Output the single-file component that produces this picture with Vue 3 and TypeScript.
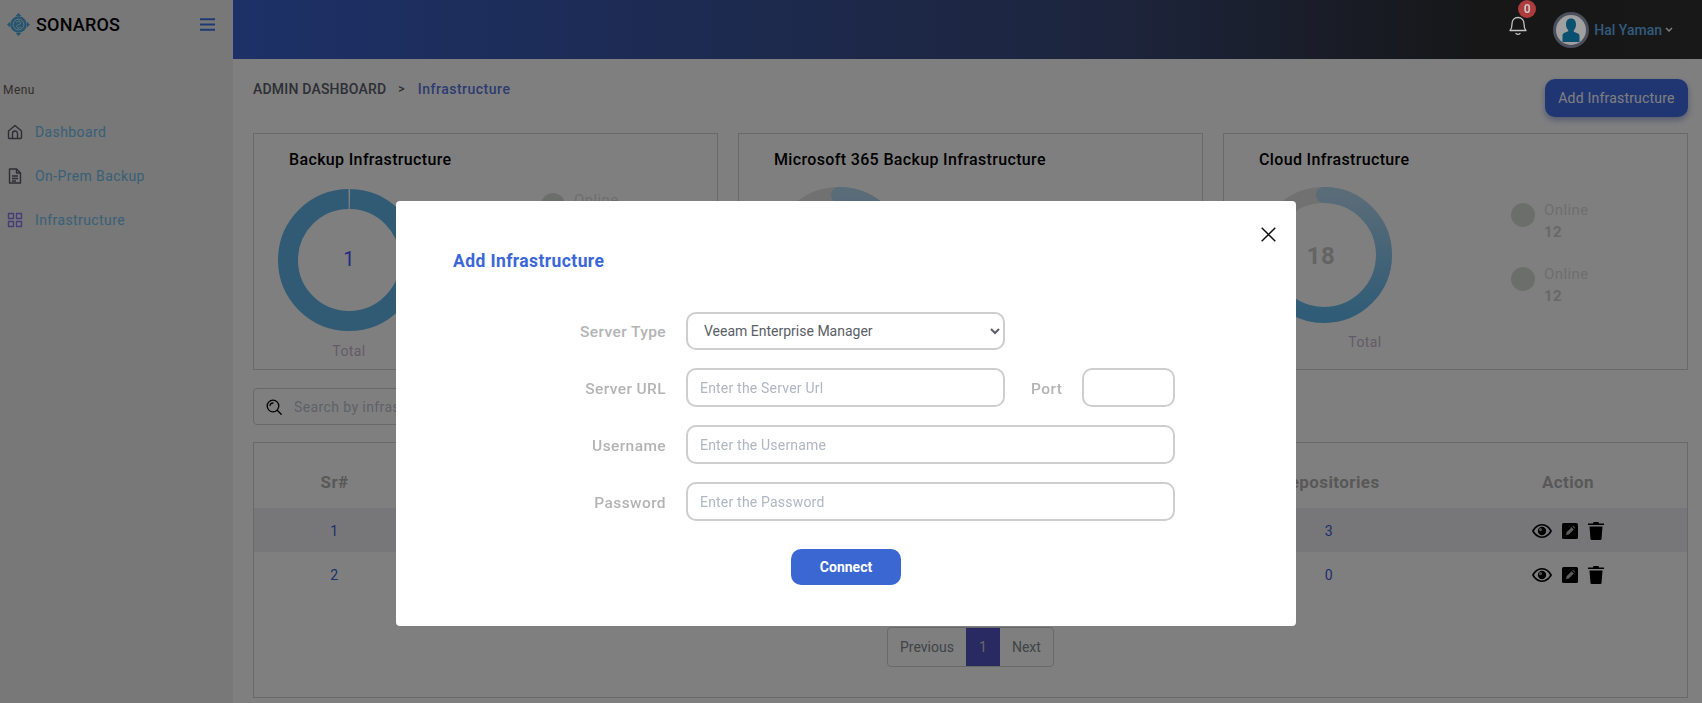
<template>
  <div class="page">
    <aside class="sidebar">
      <div class="brand">
        <svg class="logo" viewBox="0 0 24 24" width="23" height="23">
          <path d="M12 0l3 3.200h-6zM12 24l-3-3.200h6zM0 12l3.200-3v6zM24 12l-3.200 3V9z" fill="#4fa8de"/>
          <circle cx="12" cy="12" r="8.600" fill="#4fa8de"/>
          <circle cx="12" cy="12" r="5.600" fill="none" stroke="#d8eef8" stroke-width="1"/>
          <path d="M9.500 10c1-2 4.500-2 5 0s-4.500 2-4.500 4 3.500 2 4.500.5" fill="none" stroke="#d8eef8" stroke-width="1"/>
        </svg>
        <span class="brand-name">SONAROS</span>
        <svg class="burger" viewBox="0 0 15 13" width="15" height="13">
          <path d="M0 1.200h15M0 6.500h15M0 11.800h15" stroke="#3c74e8" stroke-width="2"/>
        </svg>
      </div>
      <div class="menu-label">Menu</div>
      <nav class="menu">
        <a v-for="item in menu" :key="item.label" class="menu-item">
          <svg viewBox="0 0 16 16" width="16" height="16" fill="none" :stroke="item.stroke" stroke-width="1.400" stroke-linejoin="round">
            <path v-for="d in item.paths" :key="d" :d="d"/>
          </svg>
          <span>{{ item.label }}</span>
        </a>
      </nav>
    </aside>

    <div class="content">
      <header class="topbar">
        <div class="bell">
          <svg viewBox="0 0 18 22" width="18" height="22" fill="none" stroke="#c4c4c4" stroke-width="1.300">
            <path d="M1 16.500c1.500-1.500 2-2.500 2-6.500 0-4 2.500-6.500 6-6.500s6 2.500 6 6.500c0 4 .5 5 2 6.500z" stroke-linejoin="round"/>
            <path d="M7 19.500q2 1.600 4 0" stroke-linecap="round"/>
          </svg>
          <span class="badge">0</span>
        </div>
        <div class="avatar">
          <svg viewBox="0 0 30 30" width="30" height="30">
            <circle cx="15" cy="15" r="15" fill="#a0a0a0"/>
            <path d="M15 3.500c3.400 0 5 2.600 5 6 0 2.600-1 4.600-2.200 5.800v1.500l4.200 1.700c1 .5 1.500 1.500 1.500 2.700V27H6.500v-6.300c0-1.200.5-2.200 1.500-2.700l4.200-1.700v-1.500C11 14.100 10 12.100 10 9.500c0-3.400 1.600-6 5-6z" fill="#0a5070"/>
          </svg>
        </div>
        <span class="user-name">Hal Yaman</span>
        <svg class="user-caret" viewBox="0 0 8 6" width="8" height="6" fill="none" stroke="#fff" stroke-width="1.500">
          <path d="M1 1l3 3 3-3"/>
        </svg>
      </header>

      <main class="main">
        <div class="crumb-row">
          <div class="crumbs">
            <span class="crumb-root">ADMIN DASHBOARD</span>
            <span class="crumb-sep">&gt;</span>
            <span class="crumb-current">Infrastructure</span>
          </div>
          <button class="add-btn">Add Infrastructure</button>
        </div>

        <section class="cards">
          <article v-for="(card, i) in cards" :key="card.title" class="card" :class="card.kind">
            <h3 class="card-title">{{ card.title }}</h3>
            <div class="card-body">
              <div class="donut-col">
                <div class="donut">
                  <svg v-if="card.kind === 'solid'" viewBox="0 0 142 142" width="142" height="142">
                    <circle cx="71" cy="71" r="61" fill="none" stroke="#62b7ea" stroke-width="20"
                      :stroke-dasharray="`${ringLen(61) - 2} 2`" stroke-dashoffset="-1" transform="rotate(-90 71 71)"/>
                  </svg>
                  <svg v-else viewBox="0 0 136 136" width="136" height="136">
                    <defs>
                      <linearGradient :id="`arc-grad-${i}`" x1="1" y1="0" x2="0" y2="0">
                        <stop offset="0" stop-color="#b4d8f0"/>
                        <stop offset="1" stop-color="#60b8ee"/>
                      </linearGradient>
                    </defs>
                    <circle cx="68" cy="68" r="60" fill="none" stroke="#e2e2e2" stroke-width="16"/>
                    <circle cx="68" cy="68" r="60" fill="none" :stroke="`url(#arc-grad-${i})`" stroke-width="16"
                      stroke-linecap="round" :stroke-dasharray="`${ringLen(60) * card.share} ${ringLen(60)}`" transform="rotate(-90 68 68)"/>
                  </svg>
                  <span class="donut-value">{{ card.total }}</span>
                </div>
                <div class="donut-total">Total</div>
              </div>
              <ul class="legend">
                <li v-for="n in 2" :key="n" class="legend-item">
                  <i class="legend-dot"></i>
                  <div class="legend-text">
                    <span>Online</span>
                    <b>12</b>
                  </div>
                </li>
              </ul>
            </div>
          </article>
        </section>

        <label class="search">
          <svg viewBox="0 0 16 16" width="16" height="16" fill="none" stroke="#000" stroke-width="1.300">
            <circle cx="7" cy="7" r="5.800"/>
            <path d="M4 6.500a3 3 0 0 1 3-2.500M11.200 11.200l4 4" stroke-linecap="round"/>
          </svg>
          <input type="text" placeholder="Search by infrastructure" />
        </label>

        <section class="table-box">
          <div class="table-row table-head">
            <span>Sr#</span>
            <span></span>
            <span>Repositories</span>
            <span>Action</span>
          </div>
          <div v-for="(row, i) in rows" :key="row.sr" class="table-row table-data" :class="{ striped: i === 0 }">
            <span class="cell-num">{{ row.sr }}</span>
            <span></span>
            <span class="cell-num">{{ row.repos }}</span>
            <span class="actions">
              <svg viewBox="0 0 20 14" width="20" height="14">
                <path fill-rule="evenodd" d="M10 0c4.600 0 8 3.200 10 7-2 3.800-5.400 7-10 7S2 10.800 0 7c2-3.800 5.400-7 10-7zM10 1.600C6.500 1.600 3.800 3.900 2 7c1.800 3.100 4.500 5.400 8 5.400s6.200-2.300 8-5.400c-1.800-3.100-4.500-5.400-8-5.400zM10 2.800a4.200 4.200 0 1 1 0 8.400 4.200 4.200 0 0 1 0-8.400z" fill="#000"/>
                <circle cx="8.500" cy="5.600" r="1.600" fill="#9a9a9a"/>
              </svg>
              <svg viewBox="0 0 16 16" width="16" height="16">
                <rect width="16" height="16" rx="1.500" fill="#000"/>
                <path d="M4 12l.6-2.800 5-5 2.200 2.200-5 5zM10.400 3.400l.7-.7 2.200 2.200-.7.7z" fill="#b8b8b8"/>
              </svg>
              <svg viewBox="0 0 16 18" width="16" height="18">
                <path d="M5.500 0h5l.5 1.500h5V3H0V1.500h5zM1.500 4.500h13l-1 12.500q-.1 1-1 1H3.500q-.9 0-1-1z" fill="#000"/>
              </svg>
            </span>
          </div>
          <div class="pager">
            <a>Previous</a>
            <a class="active">1</a>
            <a>Next</a>
          </div>
        </section>
      </main>
    </div>

    <div class="backdrop"></div>

    <div class="modal-wrap">
      <div class="modal">
        <button class="modal-close" aria-label="Close">
          <svg viewBox="0 0 15 15" width="15" height="15" fill="none" stroke="#111" stroke-width="1.500">
            <path d="M.7.7l13.600 13.600M14.300.7L.7 14.300"/>
          </svg>
        </button>
        <h2 class="modal-title">Add Infrastructure</h2>
        <form class="form" @submit.prevent>
          <div class="form-row">
            <label>Server Type</label>
            <select class="control short">
              <option>Veeam Enterprise Manager</option>
            </select>
          </div>
          <div class="form-row">
            <label>Server URL</label>
            <div class="url-line">
              <input class="control short" placeholder="Enter the Server Url" />
              <label class="port-label">Port</label>
              <input class="control port" />
            </div>
          </div>
          <div class="form-row">
            <label>Username</label>
            <input class="control" placeholder="Enter the Username" />
          </div>
          <div class="form-row">
            <label>Password</label>
            <input class="control" placeholder="Enter the Password" />
          </div>
          <button class="connect" type="submit">Connect</button>
        </form>
      </div>
    </div>
  </div>
</template>

<script setup lang="ts">
interface MenuItem {
  label: string;
  stroke: string;
  paths: string[];
}

const menu: MenuItem[] = [
  {
    label: "Dashboard",
    stroke: "#5c5c64",
    paths: [
      "M1.500 7L8 1.500 14.500 7v6.500a1 1 0 0 1-1 1h-11a1 1 0 0 1-1-1z",
      "M5.500 14.500V9.500a2.500 2.500 0 0 1 5 0v5",
    ],
  },
  {
    label: "On-Prem Backup",
    stroke: "#5c5c64",
    paths: [
      "M2.500 1h7l4 4v10h-11z",
      "M9.500 1v4h4",
      "M5 8h6M5 10.500h6M5 13h4",
    ],
  },
  {
    label: "Infrastructure",
    stroke: "#8a78f0",
    paths: [
      "M1.500 1.500h5v5h-5z",
      "M9.500 1.500h5v5h-5z",
      "M1.500 9.500h5v5h-5z",
      "M9.500 9.500h5v5h-5z",
    ],
  },
];

const cards = [
  { title: "Backup Infrastructure", kind: "solid", total: 1, share: 1 },
  { title: "Microsoft 365 Backup Infrastructure", kind: "arc", total: 18, share: 2 / 3 },
  { title: "Cloud Infrastructure", kind: "arc", total: 18, share: 2 / 3 },
];

const rows = [
  { sr: 1, repos: 3 },
  { sr: 2, repos: 0 },
];

const ringLen = (r: number) => 2 * Math.PI * r;
</script>

<style>
html,
body {
  margin: 0;
  overflow: hidden;
  background: #fff;
}
</style>

<style scoped>
.page {
  display: flex;
  width: 1702px;
  height: 703px;
  font-family: Roboto, "Liberation Sans", sans-serif;
  font-size: 14px;
  letter-spacing: 0.4px;
  color: #333;
  overflow: hidden;
}

.sidebar {
  flex: 0 0 233px;
  background: #f0f0f0;
}

.brand {
  display: flex;
  align-items: center;
  height: 48px;
  padding-left: 7px;
}

.logo {
  margin-right: 6px;
}

.brand-name {
  font-size: 18px;
  font-weight: 500;
  color: #000;
  letter-spacing: 0.2px;
}

.burger {
  margin-left: auto;
  margin-right: 18px;
}

.menu-label {
  margin-top: 34px;
  padding-left: 3px;
  font-size: 12px;
  line-height: 16px;
  color: #6a5a58;
}

.menu {
  margin-top: 24px;
  display: flex;
  flex-direction: column;
  gap: 24px;
}

.menu-item {
  display: flex;
  align-items: center;
  gap: 12px;
  height: 20px;
  padding-left: 7px;
  color: #70c0ee;
}

.content {
  flex: 1;
  min-width: 0;
  display: flex;
  flex-direction: column;
}

.topbar {
  flex: 0 0 59px;
  display: flex;
  align-items: center;
  padding-right: 29px;
  justify-content: flex-end;
  background: linear-gradient(90deg, #3a62d0 0%, #3a4a7a 60%, #2e2e30 85%, #303032 100%);
}

.bell {
  position: relative;
  z-index: 11;
  margin-right: 26px;
  height: 22px;
  margin-top: -9px;
}

.badge {
  position: absolute;
  top: -14px;
  right: -9px;
  width: 18px;
  height: 18px;
  border-radius: 50%;
  background: #ae3c3c;
  color: #c8c8c8;
  font-size: 12px;
  font-weight: 700;
  line-height: 18px;
  text-align: center;
}

.avatar {
  position: relative;
  z-index: 11;
  width: 30px;
  height: 30px;
  padding: 3px;
  border-radius: 50%;
  background: #4c4f5c;
  overflow: hidden;
}

.user-name {
  margin-left: 5px;
  font-weight: 500;
  color: #66b6f2;
  letter-spacing: 0;
}

.user-caret {
  margin-left: 3px;
}

.main {
  flex: 1;
  padding: 20px 14px 0 20px;
  background: #fff;
}

.crumb-row {
  display: flex;
  justify-content: space-between;
  align-items: flex-start;
  height: 38px;
  margin-bottom: 16px;
}

.crumbs {
  display: flex;
  align-items: center;
  height: 20px;
  font-weight: 500;
  letter-spacing: 0.2px;
}

.crumb-root {
  color: #5a5e6a;
}

.crumb-sep {
  margin: 0 13px 0 12px;
  color: #5a5e6a;
  font-size: 12px;
}

.crumb-current {
  color: #5a78e0;
  letter-spacing: 0.5px;
}

.add-btn {
  width: 143px;
  height: 38px;
  border: none;
  border-radius: 10px;
  background: #3e6ce6;
  color: #fff;
  font: inherit;
  letter-spacing: 0.2px;
  box-shadow: 0 3px 6px rgba(60, 80, 180, 0.45);
}

.cards {
  display: flex;
  gap: 20px;
}

.card {
  box-sizing: border-box;
  flex: 0 0 465px;
  height: 237px;
  padding: 15px 0 0 35px;
  border: 1px solid #d2d2d2;
}

.card-title {
  margin: 0;
  font-size: 16px;
  font-weight: 500;
  line-height: 22px;
  letter-spacing: 0.35px;
  color: #000;
}

.card-body {
  display: flex;
  margin-left: -11px;
  margin-top: 18px;
}

.donut-col {
  width: 142px;
  text-align: center;
}

.donut {
  position: relative;
  height: 142px;
}

.donut svg {
  display: block;
}

.donut-value {
  position: absolute;
  left: 0;
  right: 0;
  top: 57px;
  font-size: 20px;
  line-height: 26px;
  color: #5050ff;
}

.donut-total {
  margin-top: 10px;
  font-size: 14px;
  line-height: 20px;
  color: #c4b8d0;
}

.legend {
  list-style: none;
  margin: 4px 0 0 121px;
  padding: 0;
}

.arc .card-body {
  margin-left: -6px;
  margin-top: 16px;
}

.arc .donut-col {
  width: 136px;
}

.arc .donut {
  height: 136px;
}

.arc .donut svg {
  margin-left: 3px;
}

.arc .donut-value {
  top: 55px;
  font-size: 24px;
  font-weight: 700;
  line-height: 28px;
  color: #c8c8c8;
}

.arc .donut-total {
  margin-top: 9px;
  padding-left: 88px;
}

.arc .legend {
  margin: 16px 0 0 122px;
}

.legend-item {
  display: flex;
  gap: 9px;
  height: 64px;
}

.legend-dot {
  flex: 0 0 24px;
  height: 24px;
  border-radius: 50%;
  background: #d8dcd8;
}

.legend-text {
  display: flex;
  flex-direction: column;
  margin-top: -4px;
  color: #dcdcdc;
  font-size: 15px;
  line-height: 22px;
}

.legend-text b {
  font-size: 15px;
  font-weight: 700;
  color: #d0d0d0;
}

.search {
  display: flex;
  align-items: center;
  gap: 10px;
  box-sizing: border-box;
  width: 420px;
  height: 37px;
  margin-top: 18px;
  padding-left: 12px;
  border: 1px solid #d2d2d2;
  border-radius: 4px;
}

.search input {
  flex: 1;
  min-width: 0;
  border: none;
  outline: none;
  font: inherit;
  letter-spacing: 0.4px;
  background: transparent;
}

.search input::placeholder {
  color: #c0c4d0;
}

.table-box {
  box-sizing: border-box;
  position: relative;
  width: 1435px;
  height: 256px;
  margin-top: 17px;
  border: 1px solid #d2d2d2;
}

.table-row {
  display: grid;
  grid-template-columns: 161px 1fr 240px 238px;
  align-items: center;
  text-align: center;
}

.table-head {
  box-sizing: border-box;
  height: 65px;
  padding-top: 13px;
  font-size: 17px;
  font-weight: 700;
  color: #b0b0b0;
}

.table-data {
  height: 44px;
  padding-top: 1px;
  box-sizing: border-box;
}

.striped {
  background: #eeeef2;
}

.cell-num {
  color: #3a5cd8;
}

.actions {
  display: flex;
  justify-content: center;
  align-items: center;
  gap: 10px;
}

.pager {
  position: absolute;
  top: 184px;
  left: 633px;
  display: flex;
  height: 38px;
  border: 1px solid #d2d2d2;
  border-radius: 4px;
  color: #808890;
  line-height: 38px;
  letter-spacing: 0;
}

.pager a {
  padding: 0 12px;
}

.pager a.active {
  padding: 0;
  width: 34px;
  text-align: center;
  background: #5254c4;
  color: #d0d0d0;
}

.backdrop {
  position: fixed;
  inset: 0;
  z-index: 10;
  background: rgba(0, 0, 0, 0.5);
}

.modal-wrap {
  position: fixed;
  inset: 0;
  z-index: 20;
  display: flex;
  justify-content: center;
  align-items: flex-start;
  padding: 201px 10px 0 0;
}

.modal {
  position: relative;
  box-sizing: border-box;
  width: 900px;
  height: 425px;
  padding: 48px 0 0 57px;
  background: #fff;
  border-radius: 4px;
}

.modal-close {
  position: absolute;
  top: 26px;
  right: 20px;
  padding: 0;
  border: none;
  background: none;
  display: flex;
}

.modal-title {
  margin: 0;
  font-size: 17.500px;
  font-weight: 700;
  line-height: 24px;
  color: #3a66d8;
}

.form {
  display: flex;
  flex-direction: column;
  gap: 18px;
  margin-top: 38px;
}

.form-row {
  display: grid;
  grid-template-columns: 213px 489px;
  column-gap: 20px;
  align-items: center;
  height: 39px;
}

.form-row > label {
  padding-top: 2px;
  text-align: right;
  font-size: 15.500px;
  font-weight: 500;
  color: #b4b4b4;
}

.control {
  box-sizing: border-box;
  width: 100%;
  height: 39px;
  padding: 0 12px;
  border: 2px solid #cecece;
  border-radius: 10px;
  background: #fff;
  outline: none;
  font: inherit;
  font-size: 14px;
  letter-spacing: 0.2px;
  color: #50545c;
}

.control::placeholder {
  color: #b0b6c2;
}

select.control {
  height: 38px;
  letter-spacing: 0;
  color: #5a5e66;
}

.short {
  width: 319px;
}

.url-line {
  display: flex;
  align-items: center;
}

.port-label {
  margin-left: 26px;
  margin-right: 21px;
  width: 30px;
  padding-top: 2px;
  font-size: 15.500px;
  font-weight: 500;
  color: #b4b4b4;
}

.port {
  width: 93px;
}

.connect {
  width: 110px;
  height: 36px;
  margin: 10px 0 0 338px;
  border: none;
  border-radius: 10px;
  background: #3a67d2;
  color: #fff;
  font: inherit;
  font-weight: 700;
}
</style>
